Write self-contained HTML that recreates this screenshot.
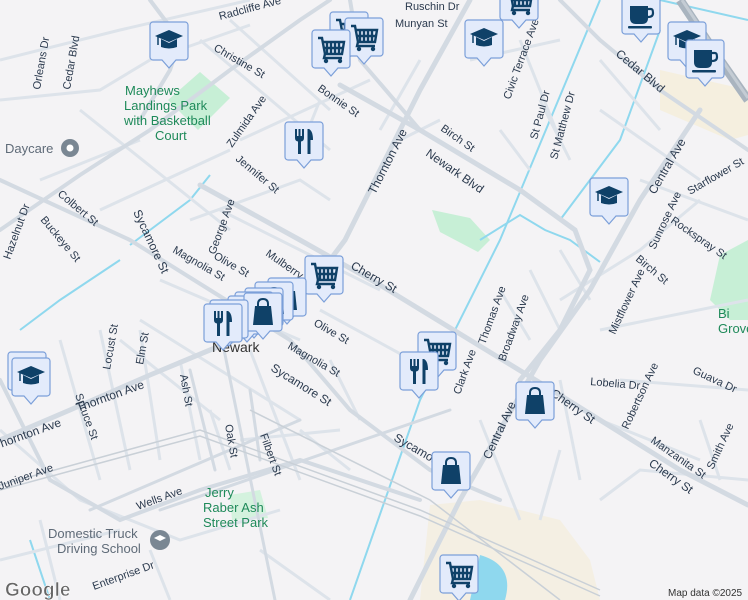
<!DOCTYPE html>
<html><head><meta charset="utf-8"><style>
html,body{margin:0;padding:0;width:748px;height:600px;overflow:hidden;background:#f4f3f5}
svg{display:block}
text{font-family:"Liberation Sans",sans-serif;font-size:11px;fill:#2b3a4e}
.g{fill:#1f8a5a;font-size:13px}
.p{fill:#5f6b78;font-size:13px}
</style></head><body>
<svg width="748" height="600" viewBox="0 0 748 600" xmlns="http://www.w3.org/2000/svg">
<defs>
<g id="box"><path d="M3 0H35A3 3 0 0 1 38 3V35A3 3 0 0 1 35 38H26L19 46L12 38H3A3 3 0 0 1 0 35V3A3 3 0 0 1 3 0Z" fill="#e3ebfb" stroke="#7b9fd9" stroke-width="1.2"/></g>
<g id="cart"><use href="#box"/><g fill="none" stroke="#0f4168" stroke-width="2.4"><path d="M6 8H10L13 24H30L32 12H11"/><path d="M15 13V23M19 13V23M23 13V23M27 13V23M12 18H31"/><path d="M13 24L12 28H30"/></g><circle cx="14" cy="31" r="2.2" fill="#0f4168"/><circle cx="28" cy="31" r="2.2" fill="#0f4168"/></g>
<g id="cap"><use href="#box"/><path d="M5 14L19 8L33 14L19 20Z" fill="#0f4168"/><path d="M11 17V25Q19 28 27 25V17L19 21Z" fill="#0f4168"/><path d="M8 15V23" stroke="#0f4168" stroke-width="1.5"/></g>
<g id="fork"><use href="#box"/><g fill="#0f4168"><path d="M10 7h2v7h1.5V7h2v7h1.5V7h2v9q0 3-3 3.5V32h-3V19.5q-3-.5-3-3.5Z"/><path d="M24 7q4 2 4 11h-2.5V32h-3V7Z"/></g></g>
<g id="bag"><use href="#box"/><path d="M14 14V11Q14 6 19 6Q24 6 24 11V14" fill="none" stroke="#0f4168" stroke-width="2"/><path d="M11 13H27L29 32H9Z" fill="#0f4168"/></g>
<g id="cup"><use href="#box"/><path d="M8 10H26V22Q26 28 20 28H14Q8 28 8 22Z" fill="#0f4168"/><path d="M26 13H29Q31 13 31 17Q31 21 26 21" fill="none" stroke="#0f4168" stroke-width="2.2"/><rect x="6" y="30" width="24" height="2.5" rx="1" fill="#0f4168"/></g>
</defs>
<!-- areas -->
<path d="M168 100L200 72L230 98L198 130Z" fill="#c7efd6"/>
<path d="M432 210L470 218L490 240L478 252L440 232Z" fill="#c7efd6"/>
<path d="M748 240L720 255L710 300L730 320L748 320Z" fill="#c7efd6"/>
<path d="M230 495L260 490L268 518L232 520Z" fill="#d4f2de"/>
<path d="M660 70L748 90L748 135L730 140L660 110Z" fill="#f5efdf"/>
<path d="M430 505L480 500L560 520L590 560L600 600L420 600Z" fill="#f4efe3"/>
<path d="M480 555Q515 565 505 600H470Z" fill="#8fd8ee"/>
<!-- streams -->
<g fill="none" stroke="#8fd8ee" stroke-width="2">
<path d="M350 600L420 400L500 240L600 0"/>
<path d="M480 240L520 215L545 230L570 240L600 262"/>
<path d="M660 0L748 20"/>
<path d="M130 245L190 200L210 175"/>
<path d="M20 330L60 300L120 260"/>
<path d="M30 540L50 600"/>
<path d="M660 30L620 140L560 220"/>
</g>
<!-- minor roads -->
<g fill="none" stroke="#dde3ea" stroke-width="3">
<path d="M0 60L120 30L250 0M0 100L100 90L150 60L250 25M80 110L230 230M40 180L140 140M100 210L230 150M230 20L330 110M200 40L330 150M240 140L370 80M190 220L300 180L330 200M220 210L380 290M160 280L300 340M140 320L300 420M120 340L220 420M60 340L100 480M100 330L130 470M140 330L160 460M180 360L200 460M210 410L230 470M250 350L300 480M300 430L350 470M320 310L430 370M380 130L420 60M470 60L560 40M520 40L560 140M540 100L570 160M600 60L660 130M600 110L700 180M640 180L748 220M560 300L640 250L700 200M600 330L748 300M600 420L700 460M620 380L748 390M700 420L720 480M560 380L580 480M560 450L540 520M480 420L520 520M600 500L640 470L748 480M0 430L80 500L180 540L280 510M0 560L120 530M40 520L60 600M150 550L170 600M260 550L330 600M330 360L360 420M240 440L340 430M300 150L320 100M400 140L440 120M500 130L530 170M530 270L560 330M500 290L530 340M560 250L590 300"/>
</g>
<!-- major roads -->
<g fill="none" stroke="#d3dae2" stroke-linecap="round">
<path d="M200 185L300 240L380 285L470 340L560 395L680 470L748 505" stroke-width="5"/>
<path d="M340 85L420 130L520 190L575 230L590 270L560 330L520 380" stroke-width="5"/>
<path d="M0 230L80 175L150 130L230 70L300 20L330 0" stroke-width="4"/>
<path d="M0 180L130 240L210 290L290 340L350 410L430 470L500 500" stroke-width="4"/>
<path d="M470 0L420 90L380 170L345 240L300 300L260 330L210 350L150 375L70 410L0 440" stroke-width="5"/>
<path d="M700 110L640 200L590 290L540 360L500 430L460 500L410 600" stroke-width="5"/>
<path d="M350 0L360 60L420 130" stroke-width="4"/>
<path d="M150 0L180 40L170 70L140 120" stroke-width="4"/>
<path d="M0 380L50 480L120 520L200 490L300 460L420 500" stroke-width="4"/>
<path d="M160 510L450 410M190 370L215 470M220 330L275 600M250 390L260 460" stroke-width="3"/>
<path d="M560 0L600 40L660 90L748 150" stroke-width="4"/>
<path d="M90 510L300 420" stroke-width="3"/>
</g>
<path d="M680 0L720 60L748 100" stroke="#a9b4bf" stroke-width="9" fill="none"/>
<path d="M682 0L722 60L748 98" stroke="#c4ccd4" stroke-width="3" fill="none"/>
<!-- railroad -->
<g fill="none" stroke="#c9d0d7" stroke-width="1.5">
<path d="M0 485L200 430L420 510L600 590"/>
<path d="M0 490L200 436L420 516L600 596"/>
<path d="M250 410L430 500L560 600"/>
</g>
<!-- labels -->
<text x="125" y="95" class="g">Mayhews</text>
<text x="124" y="110" class="g">Landings Park</text>
<text x="124" y="125" class="g">with Basketball</text>
<text x="155" y="140" class="g">Court</text>
<text x="205" y="497" class="g">Jerry</text>
<text x="203" y="512" class="g">Raber Ash</text>
<text x="203" y="527" class="g">Street Park</text>
<text x="718" y="318" class="g">Bi</text>
<text x="718" y="333" class="g">Grove</text>
<text x="5" y="153" class="p">Daycare</text>
<circle cx="70" cy="148" r="9" fill="#7a8793"/><circle cx="70" cy="148" r="3.5" fill="#fff"/>
<text x="48" y="538" class="p">Domestic Truck</text>
<text x="57" y="553" class="p">Driving School</text>
<circle cx="160" cy="540" r="10" fill="#7a8793"/><path d="M154 538l6-3 6 3-6 3z" fill="#fff"/>
<text x="212" y="352" style="font-size:14px;fill:#333">Newark</text>
<text x="668" y="596" style="font-size:10px;fill:#333">Map data ©2025</text>
<text x="5" y="596" style="font-size:19px;font-weight:bold;fill:#666;stroke:#fff;stroke-width:.6">Google</text>
<g>
<text transform="translate(70,90) rotate(-80)">Cedar Blvd</text>
<text transform="translate(40,90) rotate(-80)">Orleans Dr</text>
<text transform="translate(220,20) rotate(-15)">Radcliffe Ave</text>
<text transform="translate(213,50) rotate(30)">Christine St</text>
<text transform="translate(232,148) rotate(-55)">Zulmida Ave</text>
<text transform="translate(317,90) rotate(35)">Bonnie St</text>
<text transform="translate(235,160) rotate(40)">Jennifer St</text>
<text transform="translate(215,255) rotate(-70)">George Ave</text>
<text transform="translate(265,255) rotate(35)">Mulberry</text>
<text transform="translate(213,258) rotate(30)">Olive St</text>
<text transform="translate(172,252) rotate(30)">Magnolia St</text>
<text transform="translate(313,325) rotate(30)">Olive St</text>
<text transform="translate(287,348) rotate(30)">Magnolia St</text>
<text transform="translate(350,268) rotate(30)" style="font-size:12px">Cherry St</text>
<text transform="translate(375,195) rotate(-63)" style="font-size:12px">Thornton Ave</text>
<text transform="translate(425,155) rotate(35)" style="font-size:12px">Newark Blvd</text>
<text transform="translate(440,130) rotate(35)">Birch St</text>
<text transform="translate(510,100) rotate(-70)">Civic Terrace Ave</text>
<text transform="translate(537,140) rotate(-75)">St Paul Dr</text>
<text transform="translate(557,160) rotate(-75)">St Matthew Dr</text>
<text transform="translate(395,27)">Munyan St</text>
<text transform="translate(405,10)">Ruschin Dr</text>
<text transform="translate(615,55) rotate(40)" style="font-size:12px">Cedar Blvd</text>
<text transform="translate(655,195) rotate(-60)" style="font-size:12px">Central Ave</text>
<text transform="translate(690,195) rotate(-30)">Starflower St</text>
<text transform="translate(655,250) rotate(-65)">Sunrose Ave</text>
<text transform="translate(670,222) rotate(35)">Rockspray St</text>
<text transform="translate(635,260) rotate(40)">Birch St</text>
<text transform="translate(615,335) rotate(-65)">Mistflower Ave</text>
<text transform="translate(590,385) rotate(5)">Lobelia Dr</text>
<text transform="translate(628,430) rotate(-65)">Robertson Ave</text>
<text transform="translate(692,373) rotate(25)">Guava Dr</text>
<text transform="translate(650,442) rotate(35)">Manzanita St</text>
<text transform="translate(713,470) rotate(-65)">Smith Ave</text>
<text transform="translate(550,395) rotate(35)" style="font-size:12px">Cherry St</text>
<text transform="translate(648,465) rotate(35)" style="font-size:12px">Cherry St</text>
<text transform="translate(485,345) rotate(-70)">Thomas Ave</text>
<text transform="translate(505,362) rotate(-70)">Broadway Ave</text>
<text transform="translate(460,395) rotate(-70)">Clark Ave</text>
<text transform="translate(490,460) rotate(-65)" style="font-size:12px">Central Ave</text>
<text transform="translate(393,440) rotate(30)" style="font-size:12px">Sycamore St</text>
<text transform="translate(270,370) rotate(32)" style="font-size:12px">Sycamore St</text>
<text transform="translate(133,212) rotate(65)" style="font-size:12px">Sycamore St</text>
<text transform="translate(57,195) rotate(40)">Colbert St</text>
<text transform="translate(40,220) rotate(50)">Buckeye St</text>
<text transform="translate(10,260) rotate(-70)">Hazelnut Dr</text>
<text transform="translate(110,370) rotate(-80)">Locust St</text>
<text transform="translate(143,365) rotate(-80)">Elm St</text>
<text transform="translate(180,375) rotate(80)">Ash St</text>
<text transform="translate(225,425) rotate(80)">Oak St</text>
<text transform="translate(260,435) rotate(70)">Filbert St</text>
<text transform="translate(75,395) rotate(70)">Spruce St</text>
<text transform="translate(78,412) rotate(-20)" style="font-size:12px">Thornton Ave</text>
<text transform="translate(-5,450) rotate(-20)" style="font-size:12px">Thornton Ave</text>
<text transform="translate(0,490) rotate(-20)">Juniper Ave</text>
<text transform="translate(138,510) rotate(-20)">Wells Ave</text>
<text transform="translate(94,590) rotate(-20)">Enterprise Dr</text>
</g>
<!-- markers -->
<use href="#cart" x="330" y="12"/>
<use href="#cart" x="345" y="18"/>
<use href="#cart" x="312" y="30"/>
<use href="#cart" x="500" y="-18"/>
<use href="#cap" x="150" y="22"/>
<use href="#cap" x="465" y="20"/>
<use href="#cup" x="622" y="-4"/>
<use href="#cap" x="668" y="22"/>
<use href="#cup" x="686" y="40"/>
<use href="#cap" x="590" y="178"/>
<use href="#cap" x="8" y="352"/>
<use href="#cap" x="12" y="358"/>
<use href="#fork" x="285" y="122"/>
<use href="#cart" x="305" y="256"/>
<use href="#bag" x="268" y="278"/>
<use href="#bag" x="255" y="282"/>
<use href="#bag" x="245" y="288"/>
<use href="#bag" x="235" y="292"/>
<use href="#bag" x="228" y="296"/>
<use href="#bag" x="244" y="293"/>
<use href="#fork" x="210" y="300"/>
<use href="#fork" x="204" y="304"/>
<use href="#cart" x="418" y="332"/>
<use href="#fork" x="400" y="352"/>
<use href="#bag" x="516" y="382"/>
<use href="#bag" x="432" y="452"/>
<use href="#cart" x="440" y="555"/>
</svg>
</body></html>
